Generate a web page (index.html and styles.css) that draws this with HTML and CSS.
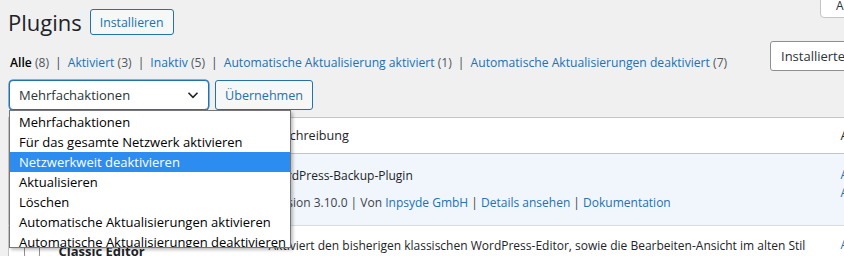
FILE: index.html
```html
<!DOCTYPE html>
<html lang="de">
<head>
<meta charset="utf-8">
<title>Plugins</title>
<link rel="stylesheet" href="styles.css">
</head>
<body>
<div class="screen-tab">Ansicht anpassen</div>
<div class="wrap">
  <div class="title-row">
    <h1 class="title">Plugins</h1>
    <a class="btn btn-outline" href="#">Installieren</a>
  </div>
  <div class="nav-grid">
    <ul class="subsubsub">
      <li><a class="current" href="#">Alle <span class="count">(8)</span></a><span class="sep">|</span></li>
      <li><a href="#">Aktiviert <span class="count">(3)</span></a><span class="sep">|</span></li>
      <li><a href="#">Inaktiv <span class="count">(5)</span></a><span class="sep">|</span></li>
      <li><a href="#">Automatische Aktualisierung aktiviert <span class="count">(1)</span></a><span class="sep">|</span></li>
      <li><a href="#">Automatische Aktualisierungen deaktiviert <span class="count">(7)</span></a></li>
    </ul>
    <div class="search"><span class="btn btn-gray">Installierte Plugins durchsuchen</span></div>
    <div class="tablenav">
      <div class="select-wrap">
        <div class="select">
          <span>Mehrfachaktionen</span>
          <svg class="chev" width="14" height="14" viewBox="0 0 14 14"><path d="M2.5 4.8 L7 9.3 L11.5 4.8" fill="none" stroke="#1d2327" stroke-width="1.6"/></svg>
        </div>
        <ul class="dropdown">
          <li>Mehrfachaktionen</li>
          <li>Für das gesamte Netzwerk aktivieren</li>
          <li class="sel">Netzwerkweit deaktivieren</li>
          <li>Aktualisieren</li>
          <li>Löschen</li>
          <li>Automatische Aktualisierungen aktivieren</li>
          <li>Automatische Aktualisierungen deaktivieren</li>
        </ul>
      </div>
      <a class="btn btn-outline btn-apply" href="#">Übernehmen</a>
    </div>
  </div>
  <table class="plugins">
    <colgroup><col class="c-check"><col class="c-name"><col class="c-desc"><col class="c-auto"></colgroup>
    <thead>
      <tr><th></th><th>Plugin</th><th>Beschreibung</th><th>Automatische Aktualisierungen</th></tr>
    </thead>
    <tbody>
      <tr class="active">
        <td><span class="cb"></span></td>
        <td><strong>BackWPup</strong></td>
        <td>
          <p class="desc">WordPress-Backup-Plugin</p>
          <p class="meta">Version 3.10.0 | Von <a href="#">Inpsyde GmbH</a> | <a href="#">Details ansehen</a> | <a href="#">Dokumentation</a></p>
        </td>
        <td class="auto"><a href="#">Automatische Aktualisierungen aktivieren</a></td>
      </tr>
      <tr>
        <td><span class="cb"></span></td>
        <td class="name2"><strong>Classic Editor</strong></td>
        <td><p class="desc">Aktiviert den bisherigen klassischen WordPress-Editor, sowie die Bearbeiten-Ansicht im alten Stil</p></td>
        <td class="auto"><a href="#">Automatische Aktualisierungen aktivieren</a></td>
      </tr>
    </tbody>
  </table>
</div>
</body>
</html>
```
FILE: styles.css
```css
* { box-sizing: border-box; }
html, body { margin: 0; padding: 0; }
body {
  background: #f0f0f1;
  color: #3c434a;
  font-family: "Open Sans", "Noto Sans", sans-serif;
  font-size: 13px;
  width: 844px;
  height: 256px;
  overflow: hidden;
  position: relative;
}
a { color: #2271b1; text-decoration: none; }

.screen-tab {
  position: absolute;
  left: 820px;
  top: -10px;
  height: 28px;
  border: 1px solid #c3c4c7;
  border-radius: 0 0 4px 4px;
  background: #fff;
  color: #2c3338;
  padding: 7px 10px 0 15px;
  font-size: 12px;
  line-height: 16px;
  white-space: nowrap;
}

.wrap { padding: 0 0 0 8px; width: 1200px; }

.title-row { display: flex; align-items: center; gap: 8px; padding-top: 9px; height: 35px; }
.title { font-size: 22px; font-weight: 400; margin: 0; color: #1d2327; line-height: 27px; }

.btn {
  display: inline-flex;
  align-items: center;
  border-radius: 3px;
  white-space: nowrap;
}
.btn-outline {
  border: 1px solid #2271b1;
  color: #2271b1;
  background: #f6f7f7;
  height: 26px;
  padding: 0 9px;
  font-size: 12.3px;
  font-weight: 500;
}
.btn-gray {
  border: 1px solid #8c8f94;
  background: #fff;
  color: #2c3338;
  height: 30px;
  padding: 0 10px;
  font-size: 13px;
}

.nav-grid {
  display: grid;
  grid-template-columns: 762px auto;
  grid-template-rows: 36px 36px;
  margin-top: 6px;
}
.subsubsub {
  list-style: none;
  margin: 0;
  padding: 13px 0 0 2px;
  display: flex;
  gap: 0;
  line-height: 18px;
  font-size: 12.15px;
}
.subsubsub li { white-space: nowrap; }
.subsubsub .current { color: #000; font-weight: 600; }
.subsubsub .current .count { font-weight: 400; }
.count { color: #50575e; }
.sep { color: #3c434a; margin: 0 6px 0 6px; }

.search { grid-column: 2; grid-row: 1; }
.tablenav { grid-column: 1; grid-row: 2; display: flex; gap: 6px; align-items: flex-start; padding: 3px 0 0 1px; }

.select-wrap { position: relative; }
.select {
  width: 200px;
  height: 30px;
  border: 1px solid #2271b1;
  border-radius: 4px;
  background: #fff;
  color: #2c3338;
  display: flex;
  align-items: center;
  justify-content: space-between;
  padding: 0 8px 0 9px;
  font-size: 13px;
  box-shadow: 0 0 0 0.5px #2271b1;
}
.chev { display: block; }
.btn-apply { height: 30px; padding: 0 9px; font-weight: 400; font-size: 12.6px; color: #2271b1; }

.dropdown {
  position: absolute;
  left: 0;
  top: 30px;
  width: 282px;
  height: 138px;
  overflow: hidden;
  margin: 0;
  padding: 1px 0 0;
  list-style: none;
  background: #fff;
  border: 1px solid #767676;
  box-shadow: 2px 2px 3px rgba(0,0,0,0.25);
  z-index: 5;
  font-size: 13px;
  color: #000;
}
.dropdown li { height: 20px; line-height: 20px; padding-left: 9px; white-space: nowrap; }
.dropdown li.sel { background: #2d8cf0; color: #fff; }

.plugins {
  border-collapse: collapse;
  table-layout: fixed;
  width: 1000px;
  margin-top: 4px;
  background: #fff;
  border: 1px solid #c3c4c7;
  font-size: 12px;
}
.c-check { width: 40px; }
.c-name { width: 210px; }
.c-desc { width: 572px; }
.c-auto { width: 178px; }
.plugins th {
  text-align: left;
  font-weight: 400;
  height: 36px;
  padding: 0 10px;
  color: #1d2327;
  border-bottom: 1px solid #c3c4c7;
  white-space: nowrap;
  font-size: 12.6px;
}
.plugins td { vertical-align: top; padding: 10px 10px 0; color: #3c434a; }
.plugins p { margin: 0; line-height: 20px; white-space: nowrap; }
.plugins p.desc { color: #1d2327; }
.plugins tr.active td { background: #f0f6fc; border-bottom: 1px solid #dcdcde; height: 72px; padding-top: 12px; }
.plugins p.meta { margin-top: 7px; }
.plugins strong { color: #1d2327; font-size: 13px; }
.plugins .name2 { padding-top: 16px; }
.auto { line-height: 18px; }
.plugins tr.active td.auto { padding-top: 12px; }
.cb {
  display: block;
  width: 16px;
  height: 16px;
  border: 1px solid #8c8f94;
  border-radius: 4px;
  margin: 7px 0 0 5px;
  background: #fff;
}
```
